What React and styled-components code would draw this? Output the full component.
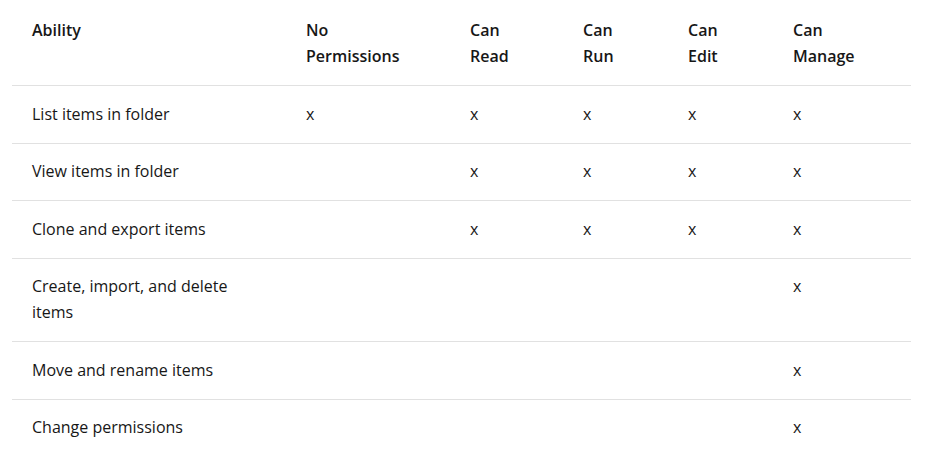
import React from 'react';
import styled, { createGlobalStyle } from 'styled-components';

const GlobalStyle = createGlobalStyle`
    body {
        margin: 0;
        background: #ffffff;
        font-family: "Open Sans", "Noto Sans", sans-serif;
        color: #171717;
    }
`;

const Wrapper = styled.div`
    padding: 2px 17px 0 12px;
`;

const Table = styled.table`
    width: 899px;
    table-layout: fixed;
    border-collapse: collapse;
    font-size: 16px;
    line-height: 1.6;
`;

const HeadCell = styled.th`
    text-align: left;
    vertical-align: top;
    font-weight: 600;
    padding: 16px 40px 16px 20px;
    border-bottom: 1px solid #e1e1e1;
`;

const Cell = styled.td`
    vertical-align: top;
    padding: 15.5px 40px 15.5px 20px;
    border-bottom: ${(p) => (p.$last ? 'none' : '1px solid #e1e1e1')};
`;

const columns = [
    { label: 'Ability', width: 274 },
    { label: 'No Permissions', width: 164 },
    { label: 'Can Read', width: 113 },
    { label: 'Can Run', width: 105 },
    { label: 'Can Edit', width: 105 },
    { label: 'Can Manage', width: 138 },
];

// which permission levels grant each ability
const rows = [
    { ability: 'List items in folder', marks: [1, 1, 1, 1, 1] },
    { ability: 'View items in folder', marks: [0, 1, 1, 1, 1] },
    { ability: 'Clone and export items', marks: [0, 1, 1, 1, 1] },
    { ability: 'Create, import, and delete items', marks: [0, 0, 0, 0, 1] },
    { ability: 'Move and rename items', marks: [0, 0, 0, 0, 1] },
    { ability: 'Change permissions', marks: [0, 0, 0, 0, 1] },
];

export default function App() {
    return (
        <Wrapper>
            <GlobalStyle />
            <Table>
                <colgroup>
                    {columns.map((c) => (
                        <col key={c.label} style={{ width: c.width }} />
                    ))}
                </colgroup>
                <thead>
                    <tr>
                        {columns.map((c) => (
                            <HeadCell key={c.label}>{c.label}</HeadCell>
                        ))}
                    </tr>
                </thead>
                <tbody>
                    {rows.map((row, i) => (
                        <tr key={row.ability}>
                            <Cell $last={i === rows.length - 1}>{row.ability}</Cell>
                            {row.marks.map((m, j) => (
                                <Cell key={j} $last={i === rows.length - 1}>
                                    {m ? 'x' : ''}
                                </Cell>
                            ))}
                        </tr>
                    ))}
                </tbody>
            </Table>
        </Wrapper>
    );
}
